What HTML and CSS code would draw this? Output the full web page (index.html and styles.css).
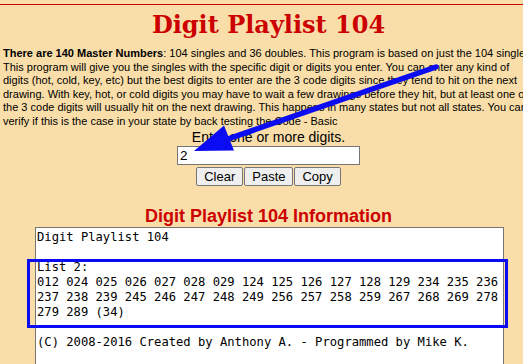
FILE: index.html
```html
<!DOCTYPE html>
<html lang="en">
<head>
    <meta charset="UTF-8">
    <title>Digit Playlist 104</title>
    <link rel="stylesheet" href="styles.css">
</head>
<body>
    <div class="page">
        <div class="top-rule"></div>
        <h1>Digit Playlist 104</h1>

        <p class="intro"><strong>There are 140 Master Numbers</strong>: 104 singles and 36 doubles. This program is based on just the 104 singles. This program will give you the singles with the specific digit or digits you enter. You can enter any kind of digits (hot, cold, key, etc) but the best digits to enter are the 3 code digits since they tend to hit on the next drawing. With key, hot, or cold digits you may have to wait a few drawings before they hit, but at least one of the 3 code digits will usually hit on the next drawing. This happens in many states but not all states. You can verify if this is the case in your state by back testing the Code - Basic</p>

        <div class="entry">
            <label for="digits">Enter one or more digits.</label>
            <input type="text" id="digits" value="2">
            <div class="buttons">
                <button>Clear</button>
                <button>Paste</button>
                <button>Copy</button>
            </div>
        </div>

        <h2>Digit Playlist 104 Information</h2>
        <div class="info-box">Digit Playlist 104

List 2:
012 024 025 026 027 028 029 124 125 126 127 128 129 234 235 236
237 238 239 245 246 247 248 249 256 257 258 259 267 268 269 278
279 289 (34)

(C) 2008-2016 Created by Anthony A. - Programmed by Mike K.

</div>

        <!-- annotation overlays -->
        <div class="highlight"></div>
        <svg class="arrow" width="523" height="364" viewBox="0 0 523 364">
            <line x1="436" y1="67" x2="222" y2="141" stroke="#0c0cf2" stroke-width="5.5" stroke-linecap="round"/>
            <polygon points="194,151 224,125.5 234,150.5" fill="#0c0cf2"/>
        </svg>
    </div>
</body>
</html>
```

FILE: styles.css
```css
html {
    background-color: #f9dea9;
    overflow: hidden;
}
body {
    margin: 0;
    font-family: 'Liberation Sans', Arial, sans-serif;
    color: #000;
}
.page {
    position: relative;
    width: 537px;
    padding-top: 4px;
}
.top-rule {
    border-top: 1px solid #cc0000;
}
h1 {
    font-family: 'DejaVu Serif', Georgia, serif;
    font-size: 24px;
    color: #cc0000;
    text-align: center;
    margin: 6px 0 8px;
    line-height: 28px;
}
.intro {
    font-size: 11px;
    width: 533px;
    margin: 0;
    padding-left: 3px;
    line-height: 13.6px;
}
.entry {
    text-align: center;
}
.entry label {
    display: block;
    font-size: 14px;
    line-height: 16px;
}
.entry input {
    display: block;
    box-sizing: border-box;
    width: 183px;
    height: 19px;
    margin: 1px auto 0;
    padding: 0 2px;
    font-family: 'Liberation Sans', Arial, sans-serif;
    font-size: 13.5px;
    border: 1px solid #767676;
    background-color: #fff;
}
.buttons {
    display: flex;
    justify-content: center;
    gap: 1px;
    margin-top: 2px;
}
.buttons button {
    box-sizing: border-box;
    height: 19px;
    padding: 0 7px;
    font-family: 'Liberation Sans', Arial, sans-serif;
    font-size: 13px;
    line-height: 15px;
    background-color: #efefef;
    border: 1px solid #767676;
    border-radius: 2px;
}
h2 {
    font-size: 18px;
    color: #cc0000;
    text-align: center;
    margin: 20px 0 0;
    line-height: 21px;
}
.info-box {
    width: 466px;
    height: 160px;
    margin-left: 35px;
    padding: 2px 0 0 1px;
    background-color: #fff;
    border: 1px solid #767676;
    font-family: 'DejaVu Sans Mono', Consolas, monospace;
    font-size: 12.16px;
    line-height: 15px;
    white-space: pre;
}
.highlight {
    position: absolute;
    left: 27px;
    top: 259px;
    width: 475px;
    height: 63px;
    border: 3px solid #0c0cf2;
}
.arrow {
    position: absolute;
    left: 0;
    top: 0;
}
```
